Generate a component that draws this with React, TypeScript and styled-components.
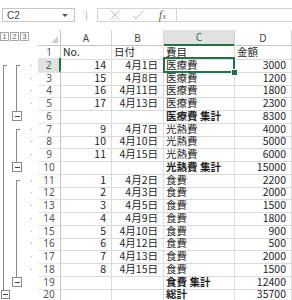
import React from 'react';
import styled, { createGlobalStyle, css } from 'styled-components';

const GREEN = '#217346';
const COLS = '38px 23px 51px 52px 71px 57px';

const GlobalStyle = createGlobalStyle`
  html, body {
    margin: 0;
    padding: 0;
    background: #fff;
  }
  body {
    font-family: "Noto Sans CJK JP", "Noto Sans", sans-serif;
  }
`;

const Page = styled.div`
  width: 292px;
  height: 300px;
  overflow: hidden;
  display: flex;
  flex-direction: column;
`;

const FormulaBar = styled.div`
  flex: none;
  height: 30px;
  box-sizing: border-box;
  padding-top: 8px;
  display: flex;
  align-items: flex-start;
`;

const NameBox = styled.div`
  margin-left: 2px;
  width: 73px;
  height: 14px;
  box-sizing: border-box;
  border: 1px solid #c6c6c6;
  padding: 0 4px;
  display: flex;
  align-items: center;
  justify-content: space-between;
  font-family: "Liberation Sans", sans-serif;
  font-size: 10px;
  color: #444;
`;

const Caret = styled.span`
  width: 0;
  height: 0;
  margin-right: 2px;
  border-left: 3px solid transparent;
  border-right: 3px solid transparent;
  border-top: 3px solid #555;
`;

const Splitter = styled.div`
  width: 22px;
  height: 14px;
  display: flex;
  align-items: center;
  justify-content: center;

  &::before {
    content: '';
    height: 7px;
    border-left: 1px dotted #9a9a9a;
  }
`;

const FormulaBox = styled.div`
  flex: 1;
  height: 14px;
  box-sizing: border-box;
  border: 1px solid #d4d4d4;
  border-right: none;
  padding-left: 5px;
  display: flex;
  align-items: center;
`;

const ToolButton = styled.span`
  width: 23px;
  display: flex;
  justify-content: center;
  color: #bdbdbd;
`;

const Fx = styled.span`
  width: 27px;
  text-align: center;
  font-family: "Liberation Serif", serif;
  font-style: italic;
  font-size: 12px;
  line-height: 12px;
  color: #666;

  small {
    font-size: 9px;
  }
`;

const FormulaInput = styled.div`
  flex: 1;
  align-self: stretch;
  border-left: 1px solid #d4d4d4;
`;

const Sheet = styled.div`
  flex: 1;
`;

const HeaderRow = styled.div`
  display: grid;
  grid-template-columns: ${COLS};
  height: 15px;
`;

const SheetRow = styled.div`
  display: grid;
  grid-template-columns: ${COLS};
  height: 12.75px;
`;

const LevelBar = styled.div`
  display: flex;
  align-items: flex-start;
  gap: 1px;
  padding-top: 2px;
`;

const LevelButton = styled.span`
  width: 9px;
  height: 9px;
  box-sizing: border-box;
  border: 1px solid #a6a6a6;
  display: flex;
  align-items: center;
  justify-content: center;
  font-family: "Liberation Sans", sans-serif;
  font-size: 7px;
  color: #555;
`;

const Corner = styled.div`
  box-sizing: border-box;
  border-right: 1px solid #c6c6c6;
  border-bottom: 1px solid #c6c6c6;
  padding: 2px;
  display: flex;
  align-items: flex-end;
  justify-content: flex-end;

  &::after {
    content: '';
    border-left: 7px solid transparent;
    border-bottom: 7px solid #cfcfcf;
  }
`;

const ColHeader = styled.div<{ $active?: boolean }>`
  box-sizing: border-box;
  border-right: 1px solid #d4d4d4;
  border-bottom: 1px solid #c6c6c6;
  display: flex;
  align-items: center;
  justify-content: center;
  font-family: "Noto Sans", sans-serif;
  font-size: 10px;
  color: #444;

  ${(p) =>
    p.$active &&
    css`
      background: #e1e1e1;
      color: ${GREEN};
      border-bottom: 2px solid ${GREEN};
    `}
`;

const OutlineCell = styled.div`
  display: flex;
`;

const Lane = styled.div<{ $w: number }>`
  position: relative;
  flex: none;
  width: ${(p) => p.$w}px;
  display: flex;
  align-items: center;
  justify-content: center;
`;

const Rail = styled.span<{ $x: number; $kind: 'start' | 'through' | 'end' }>`
  position: absolute;
  left: ${(p) => p.$x}px;
  top: ${(p) => (p.$kind === 'start' ? '50%' : '0')};
  bottom: ${(p) => (p.$kind === 'end' ? '50%' : '0')};
  border-left: 1px solid #8a8a8a;

  ${(p) =>
    p.$kind === 'start' &&
    css`
      &::before {
        content: '';
        position: absolute;
        top: 0;
        left: 0;
        width: 3px;
        border-top: 1px solid #8a8a8a;
      }
    `}
`;

const OutlineButton = styled.span<{ $size: number }>`
  position: relative;
  z-index: 1;
  width: ${(p) => p.$size}px;
  height: ${(p) => p.$size}px;
  box-sizing: border-box;
  border: 1px solid #8a8a8a;
  background: #fff;
  display: flex;
  align-items: center;
  justify-content: center;

  &::after {
    content: '';
    width: 5px;
    border-top: 1px solid #444;
  }
`;

const Dot = styled.span`
  width: 1px;
  height: 1px;
  background: #a0a0a0;
`;

const RowHeader = styled.div<{ $active?: boolean }>`
  box-sizing: border-box;
  border-right: 1px solid #c6c6c6;
  border-bottom: 1px solid #e6e6e6;
  display: flex;
  align-items: center;
  justify-content: center;
  font-family: "Noto Sans", sans-serif;
  font-size: 10px;
  color: #555;

  ${(p) =>
    p.$active &&
    css`
      background: #e1e1e1;
      color: ${GREEN};
      border-right: 2px solid ${GREEN};
    `}
`;

const Cell = styled.div<{ $right?: boolean; $bold?: boolean; $selected?: boolean }>`
  position: relative;
  box-sizing: border-box;
  border-right: 1px solid #dadada;
  border-bottom: 1px solid #dadada;
  padding: 0 ${(p) => (p.$right ? '5px' : '2px')};
  display: flex;
  align-items: center;
  justify-content: ${(p) => (p.$right ? 'flex-end' : 'flex-start')};
  white-space: nowrap;
  font-size: 10.5px;
  line-height: 12px;
  font-weight: ${(p) => (p.$bold ? 700 : 400)};
  color: #1e1e1e;

  ${(p) =>
    p.$selected &&
    css`
      z-index: 2;

      &::after {
        content: '';
        position: absolute;
        inset: -1px -1px -1px -1px;
        border: 2px solid ${GREEN};
      }

      &::before {
        content: '';
        position: absolute;
        right: -4px;
        bottom: -4px;
        width: 5px;
        height: 5px;
        background: ${GREEN};
        border: 1px solid #fff;
        z-index: 1;
      }
    `}
`;

type Entry = { no?: number; date?: string; item: string; amount: number; total?: 1 | 2 };
type Kind = 'none' | 'start' | 'through' | 'button';

const entries: Entry[] = [
  { no: 14, date: '4月1日', item: '医療費', amount: 3000 },
  { no: 15, date: '4月8日', item: '医療費', amount: 1200 },
  { no: 16, date: '4月11日', item: '医療費', amount: 1800 },
  { no: 17, date: '4月13日', item: '医療費', amount: 2300 },
  { item: '医療費 集計', amount: 8300, total: 2 },
  { no: 9, date: '4月7日', item: '光熱費', amount: 4000 },
  { no: 10, date: '4月10日', item: '光熱費', amount: 5000 },
  { no: 11, date: '4月15日', item: '光熱費', amount: 6000 },
  { item: '光熱費 集計', amount: 15000, total: 2 },
  { no: 1, date: '4月2日', item: '食費', amount: 2200 },
  { no: 2, date: '4月3日', item: '食費', amount: 2000 },
  { no: 3, date: '4月5日', item: '食費', amount: 1500 },
  { no: 4, date: '4月9日', item: '食費', amount: 1800 },
  { no: 5, date: '4月10日', item: '食費', amount: 900 },
  { no: 6, date: '4月12日', item: '食費', amount: 500 },
  { no: 7, date: '4月13日', item: '食費', amount: 2000 },
  { no: 8, date: '4月15日', item: '食費', amount: 1500 },
  { item: '食費 集計', amount: 12400, total: 2 },
  { item: '総計', amount: 35700, total: 1 },
];

const outlineFor = (i: number) => {
  const e = entries[i];
  const prev = entries[i - 1];
  const l1: Kind = i === 0 ? 'start' : e.total === 1 ? 'button' : 'through';
  const l2: Kind =
    e.total === 1 ? 'none' : e.total === 2 ? 'button' : !prev || prev.total ? 'start' : 'through';
  return { l1, l2, dot: !e.total };
};

const OutlineLane = ({ kind, width, x, size }: { kind: Kind; width: number; x: number; size: number }) => (
  <Lane $w={width}>
    {(kind === 'start' || kind === 'through') && <Rail $x={x} $kind={kind} />}
    {kind === 'button' && (
      <>
        <Rail $x={x} $kind="end" />
        <OutlineButton $size={size} />
      </>
    )}
  </Lane>
);

const CancelIcon = () => (
  <svg width="10" height="10" viewBox="0 0 10 10" fill="none" stroke="currentColor" strokeWidth="1">
    <path d="M0.5 0.5 9.5 9.5M9.5 0.5 0.5 9.5" />
  </svg>
);

const EnterIcon = () => (
  <svg width="12" height="10" viewBox="0 0 12 10" fill="none" stroke="currentColor" strokeWidth="1">
    <path d="M0.5 5.5 4 9 11.5 0.5" />
  </svg>
);

export default function App() {
  return (
    <Page>
      <GlobalStyle />
      <FormulaBar>
        <NameBox>
          <span>C2</span>
          <Caret />
        </NameBox>
        <Splitter />
        <FormulaBox>
          <ToolButton>
            <CancelIcon />
          </ToolButton>
          <ToolButton>
            <EnterIcon />
          </ToolButton>
          <Fx>
            f<small>x</small>
          </Fx>
          <FormulaInput />
        </FormulaBox>
      </FormulaBar>

      <Sheet>
        <HeaderRow>
          <LevelBar>
            <LevelButton>1</LevelButton>
            <LevelButton>2</LevelButton>
            <LevelButton>3</LevelButton>
          </LevelBar>
          <Corner />
          <ColHeader>A</ColHeader>
          <ColHeader>B</ColHeader>
          <ColHeader $active>C</ColHeader>
          <ColHeader>D</ColHeader>
        </HeaderRow>

        <SheetRow>
          <OutlineCell />
          <RowHeader>1</RowHeader>
          <Cell>No.</Cell>
          <Cell>日付</Cell>
          <Cell>費目</Cell>
          <Cell>金額</Cell>
        </SheetRow>

        {entries.map((e, i) => {
          const o = outlineFor(i);
          return (
            <SheetRow key={i}>
              <OutlineCell>
                <OutlineLane kind={o.l1} width={10} x={3} size={9} />
                <OutlineLane kind={o.l2} width={14} x={6} size={10} />
                <Lane $w={14}>{o.dot && <Dot />}</Lane>
              </OutlineCell>
              <RowHeader $active={i === 0}>{i + 2}</RowHeader>
              <Cell $right>{e.no}</Cell>
              <Cell $right>{e.date}</Cell>
              <Cell $bold={!!e.total} $selected={i === 0}>
                {e.item}
              </Cell>
              <Cell $right>{e.amount}</Cell>
            </SheetRow>
          );
        })}
      </Sheet>
    </Page>
  );
}
